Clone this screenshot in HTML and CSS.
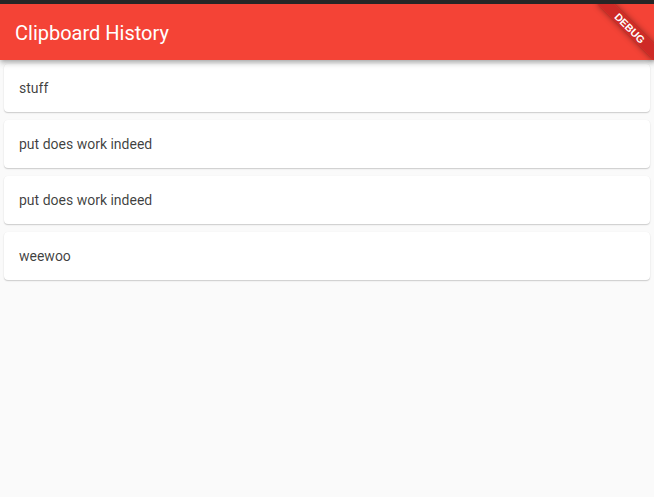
FILE: index.html
```html
<!DOCTYPE html>
<html>
<head>
<meta charset="utf-8">
<link rel="stylesheet" href="styles.css">
</head>
<body>
<div class="topbar"></div>
<div class="app">
  <header class="appbar">
    <h1 class="title">Clipboard History</h1>
  </header>
  <main class="list">
    <div class="card"><span class="item-text">stuff</span></div>
    <div class="card"><span class="item-text">put does work indeed</span></div>
    <div class="card"><span class="item-text">put does work indeed</span></div>
    <div class="card"><span class="item-text">weewoo</span></div>
  </main>
  <div class="banner"><span class="banner-text">DEBUG</span></div>
</div>
</body>
</html>
```
FILE: styles.css
```css
html, body {
  margin: 0;
  padding: 0;
  width: 654px;
  height: 497px;
  overflow: hidden;
  background: #fafafa;
  font-family: Roboto, "Liberation Sans", sans-serif;
}
.topbar {
  height: 4px;
  background: #262626;
}
.app {
  position: relative;
  height: 493px;
  overflow: hidden;
  background: #fafafa;
}
.appbar {
  position: relative;
  z-index: 2;
  height: 56px;
  background: #f44336;
  display: flex;
  align-items: center;
  padding: 0 16px 0 15px;
  box-shadow: 0 2px 4px -1px rgba(0,0,0,0.2), 0 4px 5px 0 rgba(0,0,0,0.12), 0 1px 10px 0 rgba(0,0,0,0.1);
}
.title {
  margin: 0;
  font-size: 20px;
  font-weight: 400;
  color: #ffffff;
  line-height: 24px;
  position: relative;
  top: 1px;
}
.list {
  display: flex;
  flex-direction: column;
  gap: 8px;
  padding: 4px;
}
.card {
  height: 48px;
  background: #ffffff;
  border-radius: 4px;
  box-shadow: 0 1px 1px 0 rgba(0,0,0,0.12), 0 1px 2px 0 rgba(0,0,0,0.08), 0 0 1px 0 rgba(0,0,0,0.06);
  display: flex;
  align-items: center;
  padding: 0 15px;
}
.item-text {
  font-size: 14px;
  color: rgba(0,0,0,0.76);
  line-height: 16px;
}
.banner {
  position: absolute;
  z-index: 5;
  top: 18px;
  right: -16px;
  width: 80px;
  height: 12px;
  background: rgba(183, 28, 28, 0.63);
  box-shadow: 0 0 6px rgba(0,0,0,0.45);
  transform: rotate(45deg);
  display: flex;
  align-items: center;
  justify-content: center;
}
.banner-text {
  font-family: "Liberation Sans", Roboto, sans-serif;
  font-size: 10.5px;
  font-weight: 900;
  color: #ffffff;
  line-height: 12px;
  letter-spacing: 0;
}
```
